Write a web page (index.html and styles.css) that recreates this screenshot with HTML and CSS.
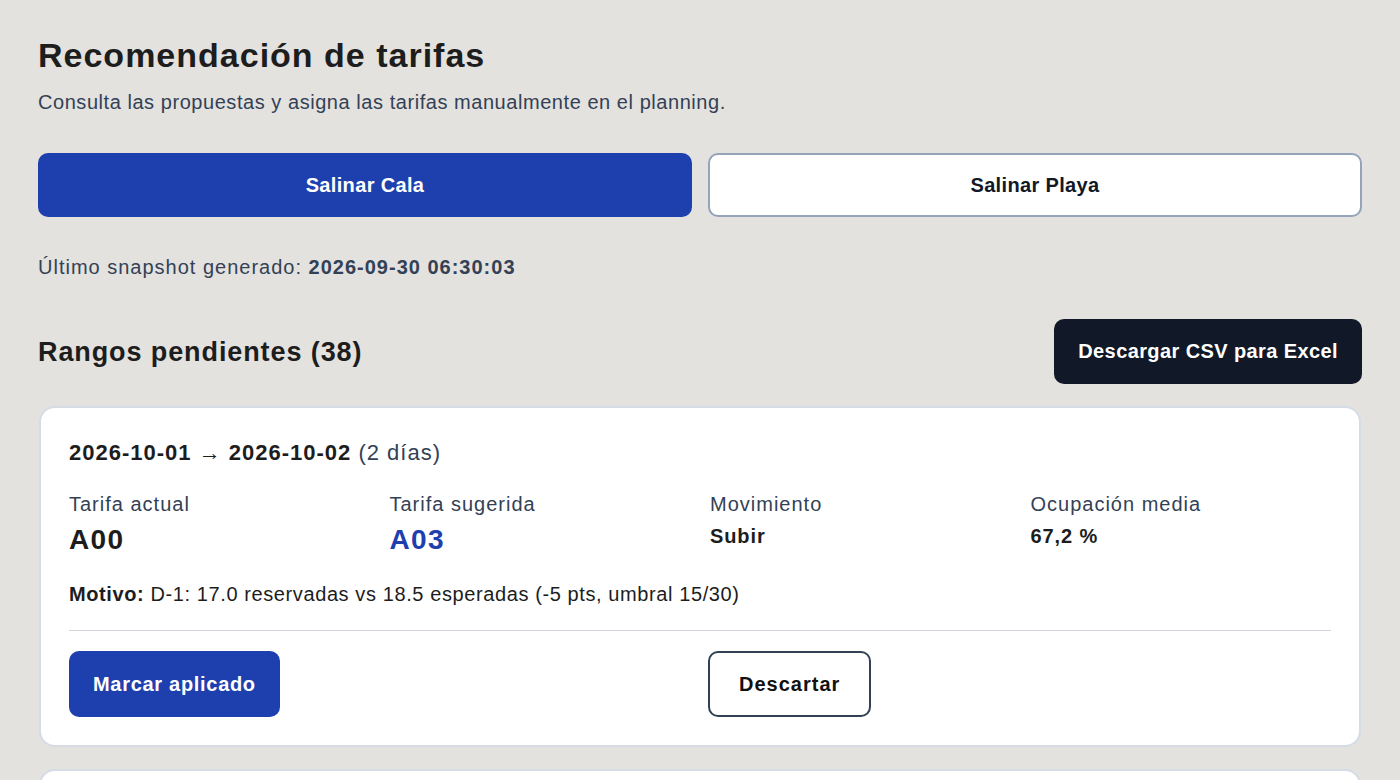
FILE: index.html
```html
<!DOCTYPE html>
<html lang="es">
<head>
<meta charset="utf-8">
<title>Recomendación de tarifas</title>
<link rel="stylesheet" href="styles.css">
</head>
<body>
<main class="page">
  <h1 class="title">Recomendación de tarifas</h1>
  <p class="subtitle">Consulta las propuestas y asigna las tarifas manualmente en el planning.</p>

  <div class="tabs">
    <button class="tab tab-active">Salinar Cala</button>
    <button class="tab">Salinar Playa</button>
  </div>

  <p class="snapshot">Último snapshot generado: <strong>2026-09-30 06:30:03</strong></p>

  <div class="section-head">
    <h2 class="section-title">Rangos pendientes (38)</h2>
    <button class="btn-dark">Descargar CSV para Excel</button>
  </div>

  <section class="card">
    <div class="range"><strong>2026-10-01 → 2026-10-02</strong> <span class="days">(2 días)</span></div>
    <div class="stats">
      <div class="stat">
        <div class="label">Tarifa actual</div>
        <div class="value value-big">A00</div>
      </div>
      <div class="stat">
        <div class="label">Tarifa sugerida</div>
        <div class="value value-big value-blue">A03</div>
      </div>
      <div class="stat">
        <div class="label">Movimiento</div>
        <div class="value">Subir</div>
      </div>
      <div class="stat">
        <div class="label">Ocupación media</div>
        <div class="value">67,2 %</div>
      </div>
    </div>
    <p class="reason"><strong>Motivo:</strong> D-1: 17.0 reservadas vs 18.5 esperadas (-5 pts, umbral 15/30)</p>
    <div class="actions">
      <button class="btn-primary">Marcar aplicado</button>
      <button class="btn-outline">Descartar</button>
    </div>
  </section>

  <section class="card card-next"></section>
</main>
</body>
</html>
```

FILE: styles.css
```css
* { box-sizing: border-box; }
html, body { margin: 0; padding: 0; }
body {
  background: #e3e2df;
  font-family: "Liberation Sans", Arial, sans-serif;
  color: #1c1c1c;
  overflow: hidden;
}
.page {
  padding: 36px 38px 0 38px;
}
.title {
  margin: 0;
  font-size: 34px;
  line-height: 38px;
  font-weight: 700;
  letter-spacing: 1px;
  color: #1d1d1d;
}
.subtitle {
  margin: 17px 0 0;
  font-size: 20px;
  line-height: 22px;
  letter-spacing: 0.55px;
  color: #334155;
}
.tabs {
  margin-top: 40px;
  display: grid;
  grid-template-columns: 1fr 1fr;
  gap: 16px;
}
.tab {
  height: 64px;
  border-radius: 10px;
  border: 2px solid #94a3b8;
  background: #ffffff;
  color: #111827;
  font-family: inherit;
  font-size: 20px;
  font-weight: 700;
  letter-spacing: 0.35px;
}
.tab-active {
  background: #1e40af;
  border-color: #1e40af;
  color: #ffffff;
}
.snapshot {
  margin: 39px 0 0;
  font-size: 20px;
  line-height: 22px;
  letter-spacing: 1px;
  color: #334155;
}
.snapshot strong { color: #334155; }
.section-head {
  margin-top: 41px;
  display: flex;
  justify-content: space-between;
  align-items: center;
}
.section-title {
  margin: 0;
  font-size: 27px;
  line-height: 30px;
  font-weight: 700;
  letter-spacing: 0.9px;
  color: #1d1d1d;
}
.btn-dark {
  height: 65px;
  padding: 0 24px;
  border: none;
  border-radius: 10px;
  background: #111827;
  color: #ffffff;
  font-family: inherit;
  font-size: 20px;
  font-weight: 700;
  letter-spacing: 0.4px;
}
.card {
  margin: 22px 1px 0;
  background: #ffffff;
  border: 2px solid #d6dce6;
  border-radius: 16px;
  padding: 33px 28px 28px 28px;
}
.range {
  font-size: 22px;
  line-height: 24px;
  letter-spacing: 1px;
  color: #1d1d1d;
}
.range .days { color: #334155; }
.stats {
  margin-top: 28px;
  display: grid;
  grid-template-columns: repeat(4, 1fr);
  gap: 20px;
  align-items: start;
}
.label {
  font-size: 20px;
  line-height: 22px;
  letter-spacing: 1px;
  color: #334155;
}
.value {
  margin-top: 10px;
  font-size: 20px;
  line-height: 22px;
  font-weight: 700;
  letter-spacing: 0.9px;
  color: #1d1d1d;
}
.value-big {
  font-size: 28px;
  line-height: 30px;
  letter-spacing: 1.4px;
}
.value-blue { color: #1e40af; }
.reason {
  margin: 28px 0 0;
  font-size: 20px;
  line-height: 22px;
  letter-spacing: 0.6px;
  color: #1d1d1d;
}
.actions {
  margin-top: 25px;
  border-top: 1px solid #d1d5db;
  padding-top: 20px;
  display: grid;
  grid-template-columns: 1fr 1fr;
  gap: 16px;
}
.btn-primary, .btn-outline {
  justify-self: start;
  height: 66px;
  border-radius: 10px;
  font-family: inherit;
  font-size: 20px;
  font-weight: 700;
}
.btn-primary {
  padding: 0 24px;
  border: none;
  background: #1e40af;
  color: #ffffff;
  letter-spacing: 0.7px;
}
.btn-outline {
  padding: 0 29px;
  border: 2px solid #334155;
  background: #ffffff;
  color: #111111;
  letter-spacing: 1px;
}
.card-next {
  height: 80px;
  padding: 0;
}
```
